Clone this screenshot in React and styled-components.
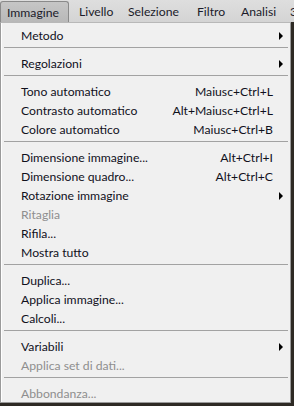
import styled, { createGlobalStyle } from "styled-components";

const GlobalStyle = createGlobalStyle`
    html, body {
        margin: 0;
        padding: 0;
        background: #2e2a24;
    }
    body {
        font-family: Lato, "Noto Sans", sans-serif;
        font-size: 12.2px;
    }
`;

const Page = styled.div`
    width: 294px;
    height: 406px;
    display: flex;
    flex-direction: column;
    overflow: hidden;
`;

const MenuBar = styled.div`
    display: flex;
    align-items: flex-end;
    height: 22px;
    background: linear-gradient(#dedede, #d4d4d4);
    flex-shrink: 0;
    overflow: hidden;
`;

const MenuTab = styled.div`
    width: ${(p) => p.$width}px;
    height: 21px;
    box-sizing: border-box;
    display: flex;
    align-items: center;
    flex-shrink: 0;
    padding-left: ${(p) => p.$left}px;
    color: #1b1b2a;
    white-space: nowrap;
    ${(p) =>
        p.$open &&
        `
        background: linear-gradient(#c6c6c6, #b8b8b8);
        border: 1px solid #8a8a8a;
        border-bottom: none;
        border-radius: 3px 3px 0 0;
    `}
`;

const Dropdown = styled.div`
    width: 291px;
    box-sizing: border-box;
    background: #f0f0f0;
    border: 1px solid #9a9a9a;
    border-top-color: #b8b8b8;
    box-shadow: inset 1px 0 0 #ffffff;
    padding: 3px 0 0 0;
    height: 381px;
`;

const Item = styled.div`
    display: flex;
    align-items: center;
    height: 19px;
    padding: 0 7px 0 20px;
    color: ${(p) => (p.$disabled ? "#8e8e8e" : "#10101c")};
    white-space: nowrap;
`;

const Label = styled.span`
    flex: 1;
`;

const Shortcut = styled.span`
    margin-right: 10px;
`;

const Arrow = styled.span`
    width: 0;
    height: 0;
    border-top: 4px solid transparent;
    border-bottom: 4px solid transparent;
    border-left: 4px solid #000;
`;

const Separator = styled.div`
    height: 1px;
    background: #a2a2a2;
    margin: 2px 2px 6px 3px;
`;

const tabs = [
    { label: "Immagine", width: 69, left: 6, open: true },
    { label: "Livello", width: 50, left: 10 },
    { label: "Selezione", width: 69, left: 9 },
    { label: "Filtro", width: 44, left: 9 },
    { label: "Analisi", width: 49, left: 9 },
    { label: "3D", width: 40, left: 9 },
];

const entries = [
    { label: "Metodo", sub: true },
    "-",
    { label: "Regolazioni", sub: true },
    "-",
    { label: "Tono automatico", key: "Maiusc+Ctrl+L" },
    { label: "Contrasto automatico", key: "Alt+Maiusc+Ctrl+L" },
    { label: "Colore automatico", key: "Maiusc+Ctrl+B" },
    "-",
    { label: "Dimensione immagine...", key: "Alt+Ctrl+I" },
    { label: "Dimensione quadro...", key: "Alt+Ctrl+C" },
    { label: "Rotazione immagine", sub: true },
    { label: "Ritaglia", disabled: true },
    { label: "Rifila..." },
    { label: "Mostra tutto" },
    "-",
    { label: "Duplica..." },
    { label: "Applica immagine..." },
    { label: "Calcoli..." },
    "-",
    { label: "Variabili", sub: true },
    { label: "Applica set di dati...", disabled: true },
    "-",
    { label: "Abbondanza...", disabled: true },
];

function App() {
    return (
        <Page>
            <GlobalStyle />
            <MenuBar>
                {tabs.map((t) => (
                    <MenuTab key={t.label} $open={t.open} $width={t.width} $left={t.left}>
                        {t.label}
                    </MenuTab>
                ))}
            </MenuBar>
            <Dropdown>
                {entries.map((e, i) =>
                    e === "-" ? (
                        <Separator key={i} />
                    ) : (
                        <Item key={i} $disabled={e.disabled}>
                            <Label>{e.label}</Label>
                            {e.key && <Shortcut>{e.key}</Shortcut>}
                            {e.sub && <Arrow />}
                        </Item>
                    )
                )}
            </Dropdown>
        </Page>
    );
}

export default App;
